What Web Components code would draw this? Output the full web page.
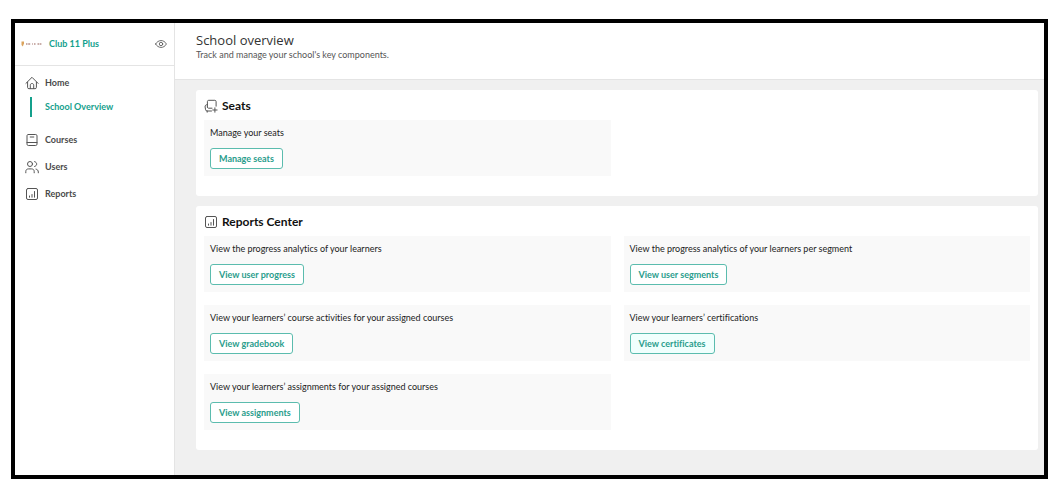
<!DOCTYPE html>
<html lang="en">
<head>
<meta charset="utf-8">
<meta name="viewport" content="width=device-width, initial-scale=1">
<title>School overview</title>
<style>
  html { background: #fff; }
  body {
    box-sizing: border-box;
    min-height: 100vh;
    margin: 0;
    padding: 19px 15px 23px 11px;
    display: flex;
    font: 9px/14px Lato, "Open Sans", sans-serif;
    font-variant-ligatures: none;
    color: #222;
    --accent: #14a08c;
    --line: #e4e4e4;
  }
</style>
</head>
<body>
<school-app>
  <app-sidebar slot="sidebar"></app-sidebar>
  <page-header slot="header">
    School overview
    <span slot="subtitle">Track and manage your school's key components.</span>
  </page-header>
  <section-card icon="seat" heading="Seats">
    <action-tile action="Manage seats">Manage your seats</action-tile>
  </section-card>
  <section-card icon="report" heading="Reports Center">
    <action-tile action="View user progress">View the progress analytics of your learners</action-tile>
    <action-tile action="View user segments">View the progress analytics of your learners per segment</action-tile>
    <action-tile action="View gradebook">View your learners’ course activities for your assigned courses</action-tile>
    <action-tile action="View certificates" active>View your learners’ certifications</action-tile>
    <action-tile action="View assignments">View your learners’ assignments for your assigned courses</action-tile>
  </section-card>
</school-app>

<script>
const ICONS = {
  home: '<path d="M.9 7.400 7 1.300l6.100 6.100M2.600 6.200v5.200c0 .8.5 1.300 1.300 1.300h6.200c.8 0 1.300-.5 1.300-1.300V6.200M5.300 12.500V9.200C5.300 8.100 6 7.500 7 7.500s1.700.6 1.700 1.700v3.300"/>',
  book: '<path d="M3.300 1.500h7.400c.8 0 1.300.5 1.300 1.300v8.400c0 .8-.5 1.300-1.300 1.300H3.300c-.8 0-1.300-.5-1.300-1.300V2.800c0-.8.5-1.300 1.300-1.300ZM2 9.500h10M5.200 4h3.600"/>',
  users: '<circle cx="5" cy="4" r="2.500"/><path d="M.8 12.800v-1.200c0-1.700 1-2.700 2.700-2.700h3c1.700 0 2.700 1 2.700 2.700v1.200M9.600 1.600c2.900.7 2.900 4.200 0 4.900M11 9.100c1.500.3 2.300 1.400 2.300 2.900v.8"/>',
  report: '<rect x="1.500" y="1.500" width="11" height="11" rx="1.500"/><path d="M4.500 10.200V9M7 10.200V7.500M9.500 10.200V4.500"/>',
  seat: '<path d="M3.400 8.200V2.600c0-.8.500-1.300 1.300-1.300h6.100c.8 0 1.300.5 1.300 1.300v4.600M3.400 5.600C1.800 5.600.9 6.500 1.100 8l.5 2.800c.1.800.6 1.200 1.400 1.200h4.500M3.400 8.200c.1.700.5 1 1.200 1h3.400M3.200 12v1.200M10.900 8.800v4.400M8.700 11h4.400"/>',
  eye: '<path d="M.7 7c3-5.400 9.600-5.400 12.600 0-3 5.400-9.600 5.400-12.600 0Z"/><circle cx="7" cy="7" r="2"/>'
};

function define(name, build) {
  customElements.define(name, class extends HTMLElement {
    constructor() {
      super();
      this.attachShadow({ mode: "open" });
    }
    connectedCallback() {
      this.shadowRoot.innerHTML = build(this);
    }
  });
}

define("line-icon", el => `
  <style>
    :host { display: block; width: 14px; height: 14px; flex: none; color: #555; }
    svg { display: block; width: 100%; height: 100%; fill: none; stroke: currentColor; stroke-width: 1; stroke-linecap: round; stroke-linejoin: round; }
  </style>
  <svg viewBox="0 0 14 14" aria-hidden="true">${ICONS[el.getAttribute("name")]}</svg>`);

define("school-app", () => `
  <style>
    :host { flex: 1; min-width: 0; display: grid; grid-template-columns: 159px minmax(0, 1fr); border: 4px solid #000; background: #fff; }
    .content { display: flex; flex-direction: column; border-left: 1px solid var(--line); min-width: 0; }
    main { flex: 1; background: #f0f0f0; padding: 10px 6px 20px 21px; display: flex; flex-direction: column; gap: 10px; }
  </style>
  <slot name="sidebar"></slot>
  <div class="content">
    <slot name="header"></slot>
    <main><slot></slot></main>
  </div>`);

define("brand-logo", () => `
  <style>
    :host { display: block; width: 22px; height: 6px; flex: none; }
    svg { display: block; width: 100%; height: 100%; }
  </style>
  <svg viewBox="0 0 22 6" role="img" aria-label="Club logo">
    <path d="M.5.500h2.500v2L1.800 5.500.5 4Z" fill="#dba35c"/>
    <path d="M5 3h1.500M7.200 3h2M11 3h.8M13 3h1.500M16.500 3h1.500M18.600 3h1.800" stroke="#b58d86" stroke-width="2" opacity=".7"/>
  </svg>`);

define("nav-item", el => `
  <style>
    :host { display: block; }
    a { display: flex; align-items: center; gap: 6px; height: 27px; padding-left: 10px; color: #4a4a4a; font-weight: 700; text-decoration: none; }
  </style>
  <a href="#"><line-icon name="${el.getAttribute("icon")}"></line-icon><slot></slot></a>`);

define("nav-subitem", () => `
  <style>
    :host { display: block; padding: 1px 0 9px 15px; }
    a { display: block; height: 20px; line-height: 20px; border-left: 2px solid var(--accent); padding-left: 13px; color: var(--accent); font-weight: 700; text-decoration: none; }
  </style>
  <a href="#" aria-current="page"><slot></slot></a>`);

define("app-sidebar", () => `
  <style>
    :host { display: block; background: #fff; }
    .brand { display: flex; align-items: center; box-sizing: border-box; height: 43px; padding: 0 7px 0 6px; border-bottom: 1px solid var(--line); }
    .brand a { flex: 1; margin-left: 6px; font-weight: 700; color: var(--accent); text-decoration: none; }
    button { display: block; padding: 0; border: 0; background: none; }
    line-icon { width: 12px; height: 12px; }
    nav { padding-top: 3px; }
  </style>
  <div class="brand">
    <brand-logo></brand-logo>
    <a href="#">Club 11 Plus</a>
    <button type="button" aria-label="Preview"><line-icon name="eye"></line-icon></button>
  </div>
  <nav>
    <nav-item icon="home">Home</nav-item>
    <nav-subitem>School Overview</nav-subitem>
    <nav-item icon="book">Courses</nav-item>
    <nav-item icon="users">Users</nav-item>
    <nav-item icon="report">Reports</nav-item>
  </nav>`);

define("page-header", () => `
  <style>
    :host { display: block; box-sizing: border-box; min-height: 57px; padding: 9px 21px; border-bottom: 1px solid var(--line); background: #fff; }
    h1 { margin: 0; font: 400 13px/16px "Open Sans", sans-serif; color: #333; }
    p { margin: 0; color: #555; }
  </style>
  <h1><slot></slot></h1>
  <p><slot name="subtitle"></slot></p>`);

define("section-card", el => `
  <style>
    :host { display: block; padding: 0 8px 20px; background: #fff; border-radius: 3px; }
    h2 { display: flex; align-items: center; gap: 4px; box-sizing: border-box; height: 30px; margin: 0; padding-top: 2px; font-size: 12px; font-weight: 700; color: #111; }
    .tiles { display: grid; grid-template-columns: repeat(2, minmax(0, 1fr)); gap: 13px; }
  </style>
  <h2><line-icon name="${el.getAttribute("icon")}"></line-icon>${el.getAttribute("heading")}</h2>
  <div class="tiles"><slot></slot></div>`);

define("action-tile", el => `
  <style>
    :host { display: block; padding: 6px 6px 7px; background: #f9f9f9; }
    p { margin: 0 0 8px; color: #222; }
    button { display: block; box-sizing: border-box; height: 21px; padding: 1px 8px 0; border: 1px solid #5bbcae; border-radius: 3px; background: #fff; font: inherit; font-weight: 700; color: #2a9d8c; }
    :host([active]) button { background: #f0fffd; }
  </style>
  <p><slot></slot></p>
  <button type="button">${el.getAttribute("action")}</button>`);
</script>
</body>
</html>
